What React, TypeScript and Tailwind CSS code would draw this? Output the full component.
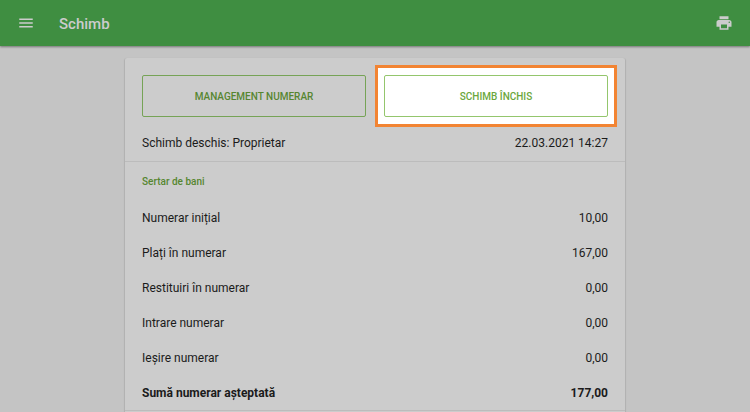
import { MdMenu, MdPrint } from "react-icons/md";

interface CashRow {
  label: string;
  amount: string;
  total?: boolean;
}

const rows: CashRow[] = [
  { label: "Numerar inițial", amount: "10,00" },
  { label: "Plați în numerar", amount: "167,00" },
  { label: "Restituiri în numerar", amount: "0,00" },
  { label: "Intrare numerar", amount: "0,00" },
  { label: "Ieșire numerar", amount: "0,00" },
  { label: "Sumă numerar așteptată", amount: "177,00", total: true },
];

function TopBar() {
  return (
    <header className="relative flex h-[46px] items-center bg-[#3f8e41] px-[17px] text-[#cccccc] shadow-[0_1px_2px_rgba(0,0,0,0.4)]">
      <button type="button" aria-label="Meniu">
        <MdMenu className="size-[18px]" />
      </button>
      <h1 className="ml-6 flex-1 pt-px text-[15px] leading-5 font-medium">Schimb</h1>
      <button type="button" aria-label="Imprimare">
        <MdPrint className="size-[18px]" />
      </button>
    </header>
  );
}

function ShiftActions() {
  return (
    <div className="grid grid-cols-2 gap-[18px]">
      <button type="button" className="h-[42px] rounded-xs border border-[#76a356] pt-0.5 text-[10px] font-medium text-[#568630]">
        MANAGEMENT NUMERAR
      </button>
      <div className="relative">
        {/* tutorial highlight around the close button */}
        <span className="absolute -inset-x-[9px] -inset-y-2.5 border-3 border-[#f28433] bg-white" />
        <button type="button" className="relative h-[42px] w-full rounded-xs border border-[#94c66d] bg-white pt-0.5 text-[10px] font-medium text-[#6ba73c]">
          SCHIMB ÎNCHIS
        </button>
      </div>
    </div>
  );
}

export default function App() {
  return (
    <div className="flex min-h-screen flex-col bg-[#c4c4c4] font-['Roboto',sans-serif] text-xs text-[#1b1b1b]">
      <TopBar />
      <main className="flex flex-1 flex-col px-4 pt-3">
        <section className="mx-auto w-full max-w-[500px] flex-1 rounded-t-xs bg-[#cccccc] shadow-[0_1px_1px_1px_rgba(0,0,0,0.1)]">
          <div className="border-b border-[#bcbcbc] px-[17px] pt-[17px] pb-[10px]">
            <ShiftActions />
            <div className="flex justify-between pt-[18px] leading-4">
              <span>Schimb deschis: Proprietar</span>
              <span>22.03.2021 14:27</span>
            </div>
          </div>
          <div className="border-b border-[#bcbcbc] px-[17px]">
            <h2 className="pt-[13px] pb-[11px] text-[10px] leading-[14px] font-medium text-[#568630]">Sertar de bani</h2>
            <table className="w-full">
              <tbody>
                {rows.map((row) => (
                  <tr key={row.label} className={row.total ? "h-[35px] font-bold" : "h-[35px]"}>
                    <th scope="row" className={row.total ? "text-left font-bold" : "text-left font-normal"}>{row.label}</th>
                    <td className="text-right">{row.amount}</td>
                  </tr>
                ))}
              </tbody>
            </table>
          </div>
        </section>
      </main>
    </div>
  );
}
